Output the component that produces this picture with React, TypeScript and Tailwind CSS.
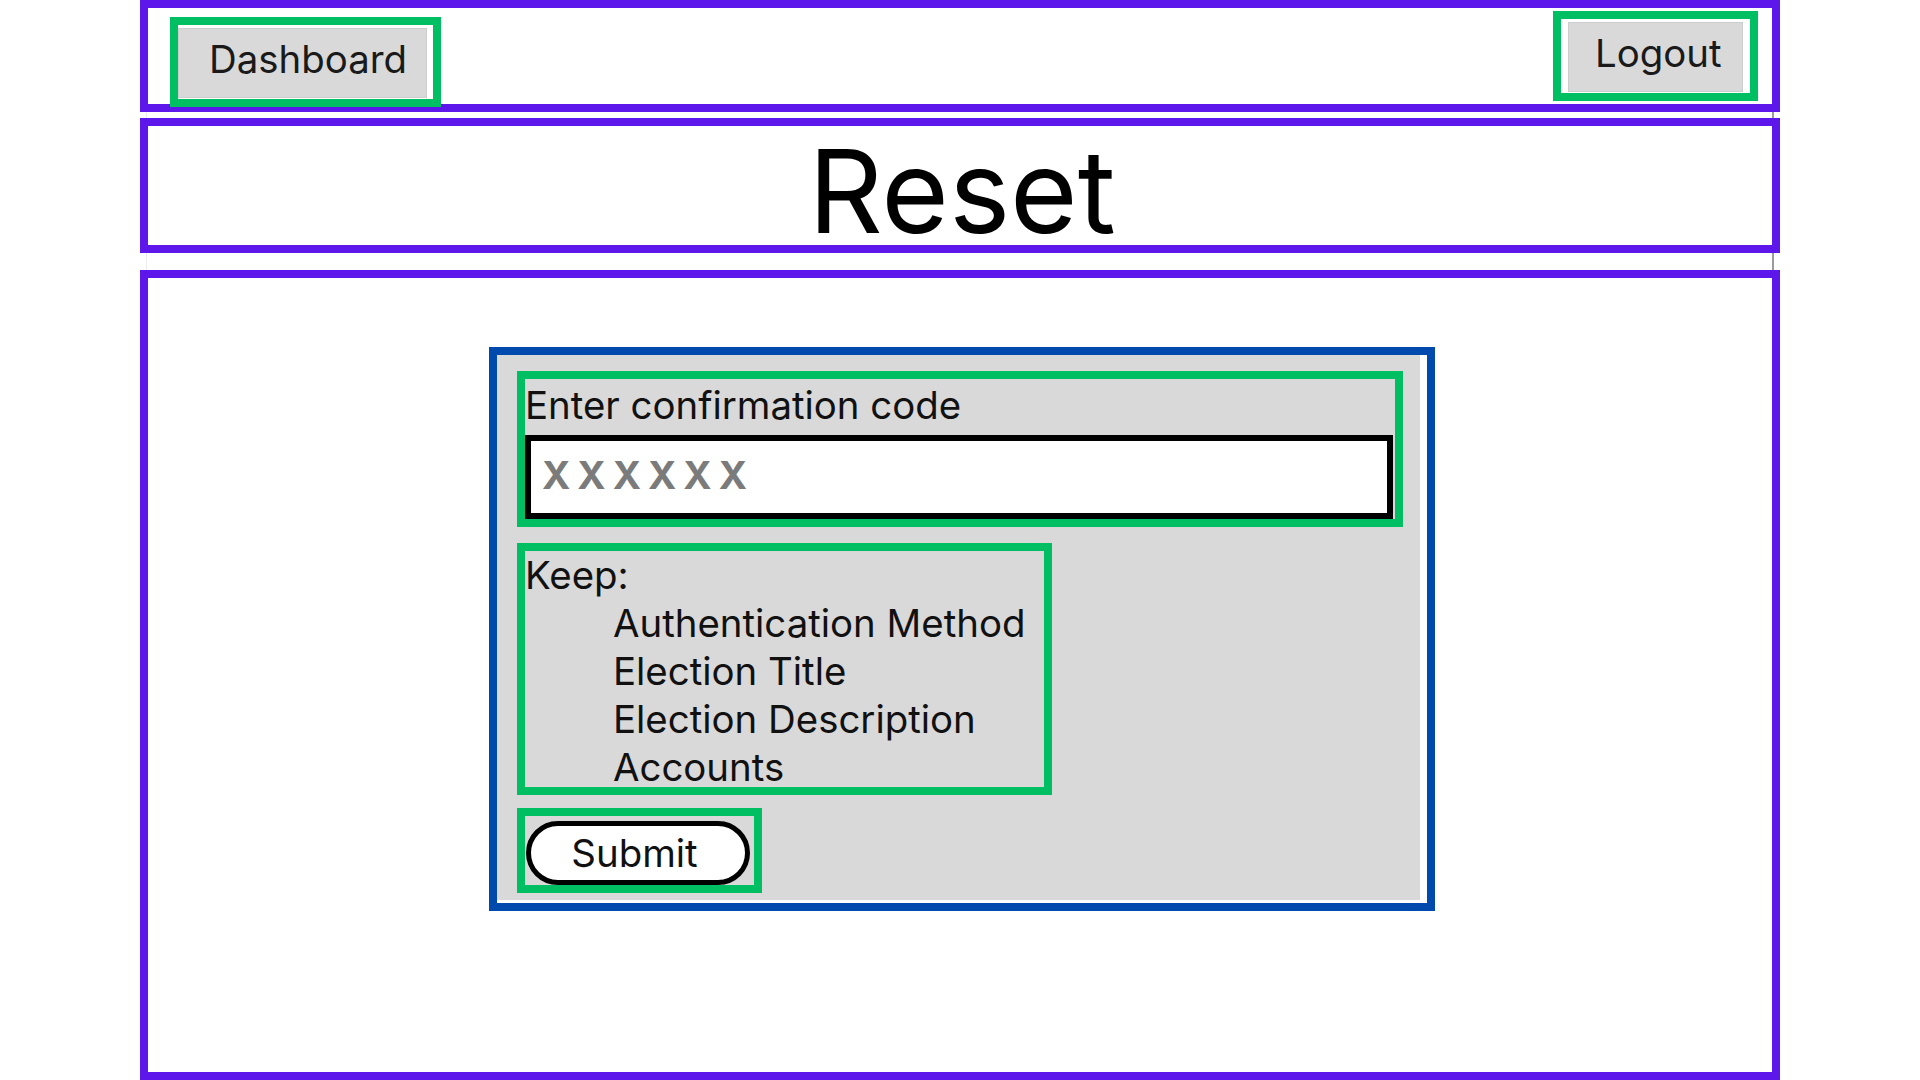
import React from 'react';

const FONT = "font-['Inter','Noto_Sans',sans-serif]";

function NavButton({ label, className }: { label: string; className: string }) {
  return (
    <div className={`h-[90px] border-8 border-[#00bf63] bg-white ${className}`}>
      <button className="h-[70px] bg-[#d9d9d9] border border-[#cdcdcd] text-left text-[38.4px] leading-[48px] text-[#1a1a1a]">
        {label}
      </button>
    </div>
  );
}

function Gap({ h }: { h: string }) {
  return <div className={`${h} mx-[6px] border-l border-l-[#ececec] border-r-2 border-r-[#9b9b9b]`} />;
}

export default function App() {
  const keep = ['Authentication Method', 'Election Title', 'Election Description', 'Accounts'];

  return (
    <div className={`min-h-screen bg-white ${FONT} text-black`}>
      <div className="w-[1640px] mx-auto flex flex-col">
        {/* Header */}
        <div className="h-[112px] border-8 border-[#5e17eb] flex items-start">
          <NavButton label="Dashboard" className="w-[271px] ml-[22px] mt-[9px] pt-[3px] [&>button]:w-[249px] [&>button]:pl-[30px] [&>button]:pb-[9px]" />
          <NavButton label="Logout" className="w-[205px] ml-auto mr-[14px] mt-[3px] pt-[3px] pl-[7px] [&>button]:w-[175px] [&>button]:pl-[26px] [&>button]:pb-[8px]" />
        </div>

        <Gap h="h-[6px]" />

        {/* Title */}
        <div className="h-[135px] border-8 border-[#5e17eb] pt-[7px] text-center">
          <h1 className="text-[116px] leading-none font-normal pl-[4px]">Reset</h1>
        </div>

        <Gap h="h-[17px]" />

        {/* Main */}
        <div className="h-[810px] border-8 border-[#5e17eb]">
          <div className="ml-[341px] mt-[69px] w-[946px] h-[564px] border-8 border-[#004aad] bg-white">
            <div className="w-[923px] h-[545px] bg-[#d9d9d9] pl-[20px] pt-[16px] flex flex-col items-start">
              {/* Confirmation code */}
              <div className="w-[886px] h-[156px] border-8 border-[#00bf63]">
                <label htmlFor="code" className="block text-[38.4px] leading-[48px] pt-[2px] mb-[6px] text-[#111]">
                  Enter confirmation code
                </label>
                <input
                  id="code"
                  placeholder="XXXXXX"
                  className="w-[868px] h-[84px] border-[6px] border-black bg-white pl-[11px] pb-[5px] text-[38.4px] font-bold tracking-[7px] outline-none placeholder:text-[#7b7b7b]"
                />
              </div>

              {/* Keep list */}
              <div className="mt-[16px] w-[535px] h-[252px] border-8 border-[#00bf63] text-[38.4px] leading-[48px] text-[#111]">
                <div>Keep:</div>
                {keep.map((k) => (
                  <div key={k} className="pl-[88px] whitespace-nowrap">
                    {k}
                  </div>
                ))}
              </div>

              {/* Submit */}
              <div className="mt-[13px] w-[245px] h-[85px] border-8 border-[#00bf63] pl-[1px] pt-[5px]">
                <button className="w-[224px] h-[64px] rounded-full border-[5px] border-black bg-white text-[38.4px] leading-[48px] pr-[7px] text-[#111]">
                  Submit
                </button>
              </div>
            </div>
          </div>
        </div>
      </div>
    </div>
  );
}
